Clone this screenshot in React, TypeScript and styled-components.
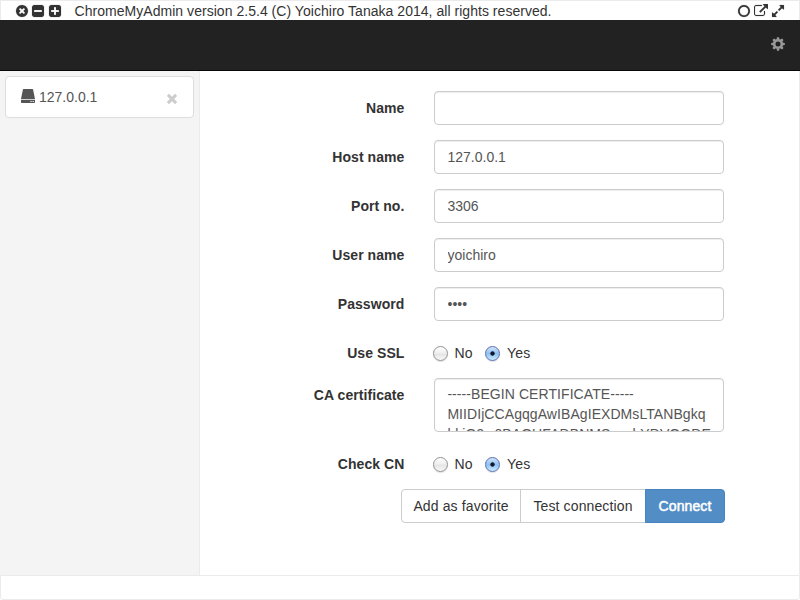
import React from "react";
import styled, { createGlobalStyle } from "styled-components";

const GlobalStyle = createGlobalStyle`
  *, *::before, *::after { box-sizing: border-box; }
  body {
    margin: 0;
    background: #fff;
    color: #333;
    font: 14px/20px "Liberation Sans", Arial, sans-serif;
  }
`;

const Window = styled.div`
  width: 800px;
  height: 600px;
  display: flex;
  flex-direction: column;
  overflow: hidden;
`;

const TitleBar = styled.header`
  height: 20px;
  flex: none;
  display: flex;
  align-items: flex-start;
  border: 1px solid #ebebeb;
  border-bottom: 0;
  padding: 0 14px;
`;

const IconGroup = styled.div<{ $gap: number }>`
  display: flex;
  gap: ${(p) => p.$gap}px;
  padding-top: 3px;
  svg { display: block; }
`;

const Title = styled.h1`
  margin: 0 auto 0 13px;
  font-size: 14px;
  font-weight: 400;
  letter-spacing: 0.034px;
  white-space: nowrap;
`;

const NavBar = styled.nav`
  height: 51px;
  flex: none;
  display: flex;
  justify-content: flex-end;
  padding: 17px 15px 0 0;
  background: #222;
  border-bottom: 1px solid #080808;
`;

const Body = styled.div`
  height: 504px;
  flex: none;
  display: flex;
`;

const Sidebar = styled.aside`
  width: 200px;
  flex: none;
  padding: 5px;
  background: #f4f4f4;
  border-right: 1px solid #ebebeb;
`;

const Favorite = styled.div`
  display: flex;
  width: 189px;
  height: 42px;
  padding: 10px 15px;
  background: #fff;
  border: 1px solid #ddd;
  border-radius: 4px;
  color: #555;
  svg { display: block; flex: none; }
`;

const FavoriteName = styled.span`
  margin: 0 auto 0 4px;
`;

const DriveIcon = styled.svg`
  margin-top: 2px;
`;

const RemoveIcon = styled.svg`
  margin-top: 6px;
`;

const Content = styled.main`
  flex: 1;
  padding-top: 20px;
  border-right: 1px solid #ebebeb;
`;

const Row = styled.div<{ $height: number }>`
  display: grid;
  grid-template-columns: 205px 290px;
  column-gap: 29px;
  height: ${(p) => p.$height}px;
  margin-bottom: 15px;
`;

const Label = styled.label`
  padding: 7px 0.6px 0 0;
  text-align: right;
  font-weight: 700;
  letter-spacing: 0.06px;
`;

const Input = styled.input`
  width: 290px;
  height: 34px;
  padding: 6px 12px 6px 12.5px;
  border: 1px solid #ccc;
  border-radius: 4px;
  outline: 0;
  color: #555;
  background: #fff;
  font: 14px/20px "Liberation Sans", Arial, sans-serif;
  box-shadow: inset 0 1px 1px rgba(0, 0, 0, 0.075);
`;

const Certificate = styled.textarea`
  display: block;
  width: 290px;
  height: 54px;
  margin: 0;
  padding: 5px 12px 5px 12.4px;
  overflow: hidden;
  resize: none;
  outline: 0;
  border: 1px solid #ccc;
  border-radius: 4px;
  background: #fff;
  color: #555;
  font: 14px/20px "Liberation Sans", Arial, sans-serif;
  letter-spacing: 0.07px;
  white-space: pre;
  box-shadow: inset 0 1px 1px rgba(0, 0, 0, 0.075);
`;

const Options = styled.div`
  display: flex;
  align-items: flex-start;
  padding-top: 7px;
`;

const Option = styled.label`
  display: flex;
  align-items: flex-start;
  gap: 7px;
  margin: 0 12.5px 0 -1.5px;
  letter-spacing: 0.1px;
  & + & { margin-left: 0; }
`;

const Radio = styled.span<{ $on?: boolean }>`
  width: 15px;
  height: 15px;
  margin-top: 3px;
  border-radius: 50%;
  border: 1px solid ${(p) => (p.$on ? "#5a6fae" : "#929292")};
  background: ${(p) =>
    p.$on
      ? "radial-gradient(circle at 6.5px 6.5px, #10182c 0 1.8px, transparent 2.5px), linear-gradient(#d3e5fa, #8ebff2 50%, #c9edff)"
      : "linear-gradient(#fff, #f0f0f0 45%, #e5e5e5 55%, #f8f8f8)"};
  box-shadow: 0 1px 1px rgba(0, 0, 0, 0.12);
`;

const ButtonGroup = styled.div`
  display: flex;
  margin-left: 201px;
`;

const Button = styled.button<{ $width: number; $primary?: boolean }>`
  width: ${(p) => p.$width}px;
  height: 34px;
  margin: 0 0 0 -1px;
  padding: 0;
  border: 1px solid ${(p) => (p.$primary ? "#4484c2" : "#ccc")};
  background: ${(p) => (p.$primary ? "#528dc6" : "#fff")};
  color: ${(p) => (p.$primary ? "#fff" : "#333")};
  font: 14px/20px "Liberation Sans", Arial, sans-serif;
  letter-spacing: 0.12px;
  -webkit-text-stroke: ${(p) => (p.$primary ? "0.5px #fff" : "0")};
  white-space: nowrap;
  &:first-child { margin-left: 0; border-radius: 4px 0 0 4px; }
  &:last-child { border-radius: 0 4px 4px 0; }
`;

const Footer = styled.footer`
  height: 25px;
  flex: none;
  border: 1px solid #ebebeb;
  border-radius: 0 0 3px 3px;
`;

const square =
  "m256-544v960q0 119-84.5 203.5t-203.5 84.5h-960q-119 0-203.5-84.5t-84.5-203.5v-960q0-119 84.5-203.5t203.5-84.5h960q119 0 203.5 84.5t84.5 203.5z";

const paths = {
  close:
    "M1277 1122q0-26-19-45l-181-181 181-181q19-19 19-45 0-27-19-46l-90-90q-19-19-46-19-26 0-45 19l-181 181-181-181q-19-19-45-19-27 0-46 19l-90 90q-19 19-19 46 0 26 19 45l181 181-181 181q-19 19-19 45 0 27 19 46l90 90q19 19 46 19 26 0 45-19l181-181 181 181q19 19 45 19 27 0 46-19l90-90q19-19 19-46zm387-226q0 209-103 385.5t-279.5 279.5-385.5 103-385.5-103-279.5-279.5-103-385.5 103-385.5 279.5-279.5 385.5-103 385.5 103 279.5 279.5 103 385.5z",
  minus:
    "M1408 960v-128q0-26-19-45t-45-19h-896q-26 0-45 19t-19 45v128q0 26 19 45t45 19h896q26 0 45-19t19-45z" + square,
  plus:
    "M1408 960v-128q0-26-19-45t-45-19h-320v-320q0-26-19-45t-45-19h-128q-26 0-45 19t-19 45v320h-320q-26 0-45 19t-19 45v128q0 26 19 45t45 19h320v320q0 26 19 45t45 19h128q26 0 45-19t19-45v-320h320q26 0 45-19t19-45z" + square,
  circle:
    "M896 352q-148 0-273 73t-198 198-73 273 73 273 198 198 273 73 273-73 198-198 73-273-73-273-198-198-273-73zm768 544q0 209-103 385.5t-279.5 279.5-385.5 103-385.5-103-279.5-279.5-103-385.5 103-385.5 279.5-279.5 385.5-103 385.5 103 279.5 279.5 103 385.5z",
  external:
    "M1408 928v320q0 119-84.5 203.5t-203.5 84.5h-832q-119 0-203.5-84.5t-84.5-203.5v-832q0-119 84.5-203.5t203.5-84.5h704q14 0 23 9t9 23v64q0 14-9 23t-23 9h-704q-66 0-113 47t-47 113v832q0 66 47 113t113 47h832q66 0 113-47t47-113v-320q0-14 9-23t23-9h64q14 0 23 9t9 23zm384-864v512q0 26-19 45t-45 19-45-19l-176-176-652 652q-10 10-23 10t-23-10l-114-114q-10-10-10-23t10-23l652-652-176-176q-19-19-19-45t19-45 45-19h512q26 0 45 19t19 45z",
  expand:
    "M883 1056q0 13-10 23l-332 332 144 144q19 19 19 45t-19 45-45 19h-448q-26 0-45-19t-19-45v-448q0-26 19-45t45-19 45 19l144 144 332-332q10-10 23-10t23 10l114 114q10 10 10 23zm781-864v448q0 26-19 45t-45 19-45-19l-144-144-332 332q-10 10-23 10t-23-10l-114-114q-10-10-10-23t10-23l332-332-144-144q-19-19-19-45t19-45 45-19h448q26 0 45 19t19 45z",
};

const Icon = ({ name }: { name: keyof typeof paths }) => (
  <svg width="14" height="14" viewBox="0 0 1792 1792" fill="#333" stroke="#333" strokeWidth="20">
    <path d={paths[name]} />
  </svg>
);

const teeth = [0, 45, 90, 135, 180, 225, 270, 315];

const Cog = () => (
  <svg width="14" height="14" viewBox="0 0 14 14">
    <circle cx="7" cy="7" r="3.8" fill="none" stroke="#999" strokeWidth="2.6" />
    {teeth.map((a) => (
      <path key={a} d="M5.5 2.6L6 0.2H8L8.5 2.6Z" fill="#999" transform={`rotate(${a} 7 7)`} />
    ))}
  </svg>
);

const certificate = [
  "-----BEGIN CERTIFICATE-----",
  "MIIDIjCCAgqgAwIBAgIEXDMsLTANBgkq",
  "hkiG9w0BAQUFADBNMSszuhYDVQQDE",
].join("\n");

const YesNo = () => (
  <Options>
    <Option><Radio />No</Option>
    <Option><Radio $on />Yes</Option>
  </Options>
);

export default function App() {
  return (
    <>
      <GlobalStyle />
      <Window>
        <TitleBar>
          <IconGroup $gap={2.3}>
            <Icon name="close" />
            <Icon name="minus" />
            <Icon name="plus" />
          </IconGroup>
          <Title>ChromeMyAdmin version 2.5.4 (C) Yoichiro Tanaka 2014, all rights reserved.</Title>
          <IconGroup $gap={3}>
            <Icon name="circle" />
            <Icon name="external" />
            <Icon name="expand" />
          </IconGroup>
        </TitleBar>
        <NavBar><Cog /></NavBar>
        <Body>
          <Sidebar>
            <Favorite>
              <DriveIcon width="14" height="14" viewBox="0 0 14 14" fill="#555">
                <path d="M2.6 0H11.4Q12 0 12.1.6L14 10H0L1.9.6Q2 0 2.6 0ZM0 10.8H14V13.2Q14 14 13.2 14H.8Q0 14 0 13.2Z" />
                <path d="M9.4 12h1.2v1H9.4zM11.6 12h1.2v1h-1.2z" fill="#fff" />
              </DriveIcon>
              <FavoriteName>127.0.0.1</FavoriteName>
              <RemoveIcon width="12" height="12" viewBox="0 0 12 12">
                <path d="M1.9 1.9L10.1 10.1M10.1 1.9L1.9 10.1" stroke="#ccc" strokeWidth="3" />
              </RemoveIcon>
            </Favorite>
          </Sidebar>
          <Content>
            <Row $height={34}><Label>Name</Label><Input type="text" /></Row>
            <Row $height={34}><Label>Host name</Label><Input type="text" defaultValue="127.0.0.1" /></Row>
            <Row $height={34}><Label>Port no.</Label><Input type="text" defaultValue="3306" /></Row>
            <Row $height={34}><Label>User name</Label><Input type="text" defaultValue="yoichiro" /></Row>
            <Row $height={34}><Label>Password</Label><Input type="text" defaultValue="••••" /></Row>
            <Row $height={27}><Label>Use SSL</Label><YesNo /></Row>
            <Row $height={54}><Label>CA certificate</Label><Certificate defaultValue={certificate} /></Row>
            <Row $height={27}><Label>Check CN</Label><YesNo /></Row>
            <ButtonGroup>
              <Button $width={120}>Add as favorite</Button>
              <Button $width={126}>Test connection</Button>
              <Button $width={80} $primary>Connect</Button>
            </ButtonGroup>
          </Content>
        </Body>
        <Footer />
      </Window>
    </>
  );
}
